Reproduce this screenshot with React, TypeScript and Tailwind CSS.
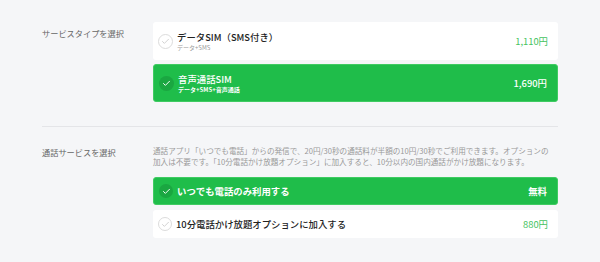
import { Check } from "lucide-react";

const font = { fontFamily: '"Noto Sans CJK JP", "Noto Sans", sans-serif' };

type Opt = {
  title: string;
  sub?: string;
  price: string;
  active?: boolean;
};

function CheckCircle({ active, size }: { active?: boolean; size: string }) {
  return (
    <span
      className={`${size} flex shrink-0 items-center justify-center rounded-full ${
        active ? "bg-[#1aa741]" : "border border-[#dcdcdc] bg-white"
      }`}
    >
      <Check
        className={active ? "h-[9px] w-[9px] text-white" : "h-[9px] w-[9px] text-[#cfcfcf]"}
        strokeWidth={2.5}
      />
    </span>
  );
}

function OptionCard({ opt, tall }: { opt: Opt; tall?: boolean }) {
  // tall = sim type cards (with subtitle), short = call option cards
  const strong = opt.active && !tall;
  return (
    <div
      className={`flex items-center rounded-[3px] pl-[5px] pr-[10px] ${
        tall ? "h-[38px]" : "h-[28px]"
      } ${opt.active ? "border border-[#3fcb62] bg-[#1fbd4a] text-white" : "bg-white text-[#222]"}`}
    >
      <CheckCircle active={opt.active} size={tall ? "h-[15px] w-[15px]" : "h-[14px] w-[14px]"} />
      <div className="ml-[4px] flex flex-1 flex-col">
        <span className={`text-[9.4px] leading-[12px] ${strong ? "font-bold" : "font-medium"}`}>
          {opt.title}
        </span>
        {opt.sub && (
          <span
            className={`mt-[1px] text-[6px] leading-[8px] ${
              opt.active ? "font-bold text-white" : "text-[#9a9a9a]"
            }`}
          >
            {opt.sub}
          </span>
        )}
      </div>
      <span
        className={`text-[9.4px] ${tall ? "mt-[1px]" : ""} ${
          opt.active ? (strong ? "font-bold text-white" : "font-medium text-white") : "text-[#46c35f]"
        }`}
      >
        {opt.price}
      </span>
    </div>
  );
}

export default function App() {
  const simTypes: Opt[] = [
    { title: "データSIM（SMS付き）", sub: "データ+SMS", price: "1,110円" },
    { title: "音声通話SIM", sub: "データ+SMS+音声通話", price: "1,690円", active: true },
  ];
  const callOptions: Opt[] = [
    { title: "いつでも電話のみ利用する", price: "無料", active: true },
    { title: "10分電話かけ放題オプションに加入する", price: "880円" },
  ];

  return (
    <main className="min-h-screen bg-[#f5f6f8] px-[42px] pt-[22px]" style={font}>
      {/* SERVICE TYPE */}
      <section className="flex pb-[24px]">
        <div className="w-[111px] shrink-0 pt-[5px] text-[8.2px] leading-[12px] text-[#666]">
          サービスタイプを選択
        </div>
        <div className="flex flex-1 flex-col gap-[4px]">
          {simTypes.map((o) => (
            <OptionCard key={o.title} opt={o} tall />
          ))}
        </div>
      </section>

      <div className="h-px bg-[#e4e5e8]" />

      {/* CALL SERVICE */}
      <section className="flex pt-[18px]">
        <div className="w-[111px] shrink-0 pt-[1px] text-[8.2px] leading-[12px] text-[#666]">
          通話サービスを選択
        </div>
        <div className="flex flex-1 flex-col">
          <p className="text-[7.6px] leading-[11px] text-[#999]">
            通話アプリ「いつでも電話」からの発信で、20円/30秒の通話料が半額の10円/30秒でご利用できます。オプションの
            <br />
            加入は不要です。「10分電話かけ放題オプション」に加入すると、10分以内の国内通話がかけ放題になります。
          </p>
          <div className="mt-[10px] flex flex-col gap-[5px]">
            {callOptions.map((o) => (
              <OptionCard key={o.title} opt={o} />
            ))}
          </div>
        </div>
      </section>
    </main>
  );
}
